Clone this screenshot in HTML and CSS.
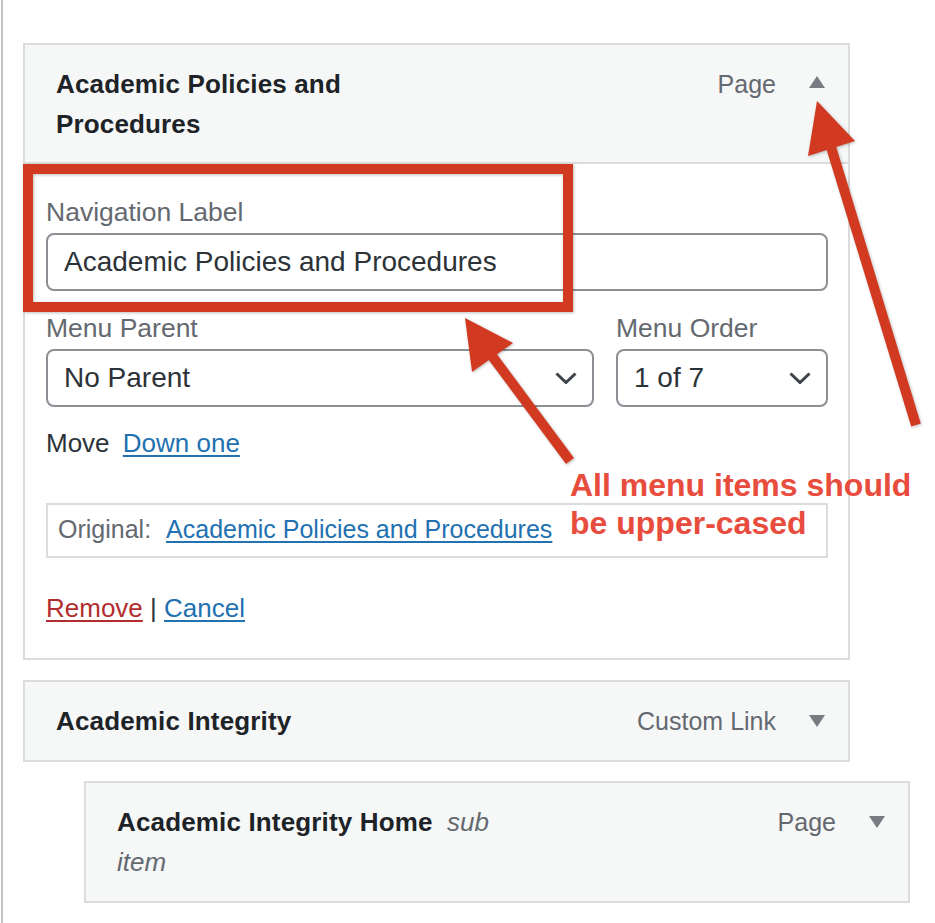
FILE: index.html
```html
<!DOCTYPE html>
<html lang="en">
<head>
<meta charset="utf-8">
<title>Menu items</title>
<link rel="stylesheet" href="styles.css">
</head>
<body>
<div class="page">
  <ul class="menu">
    <li class="item open">
      <div class="bar">
        <span class="title">Academic Policies and Procedures</span>
        <span class="controls"><span class="type">Page</span><span class="tri up"></span></span>
      </div>
      <div class="settings">
        <div class="field">
          <span class="label">Navigation Label</span>
          <div class="input">Academic Policies and Procedures</div>
        </div>
        <div class="row">
          <div class="field">
            <span class="label">Menu Parent</span>
            <div class="input select">No Parent
              <svg class="chev" width="22" height="12" viewBox="0 0 22 12"><path d="M1.5 1.5 L11 10.5 L20.5 1.5" fill="none" stroke="#3c434a" stroke-width="3"/></svg>
            </div>
          </div>
          <div class="field">
            <span class="label">Menu Order</span>
            <div class="input select">1 of 7
              <svg class="chev" width="22" height="12" viewBox="0 0 22 12"><path d="M1.5 1.5 L11 10.5 L20.5 1.5" fill="none" stroke="#3c434a" stroke-width="3"/></svg>
            </div>
          </div>
        </div>
        <div class="move">Move <a class="link" href="#">Down one</a></div>
        <div class="original">Original: <a class="link orig-link" href="#">Academic Policies and Procedures</a></div>
        <div class="actions"><a class="link remove" href="#">Remove</a> | <a class="link" href="#">Cancel</a></div>
      </div>
    </li>
    <li class="item">
      <div class="bar">
        <span class="title">Academic Integrity</span>
        <span class="controls"><span class="type">Custom Link</span><span class="tri down"></span></span>
      </div>
    </li>
    <li class="item sub">
      <div class="bar">
        <span class="title">Academic Integrity Home <em class="subtag first">sub</em> <em class="subtag">item</em></span>
        <span class="controls"><span class="type">Page</span><span class="tri down"></span></span>
      </div>
    </li>
  </ul>
</div>

<svg class="overlay" width="935" height="923" viewBox="0 0 935 923">
  <rect x="28" y="169" width="540" height="138" fill="none" stroke="#d13a21" stroke-width="10"/>
  <line x1="570" y1="461" x2="492" y2="356" stroke="#d13a21" stroke-width="10"/>
  <polygon points="465,318 513,343 472,372" fill="#d13a21"/>
  <line x1="916" y1="425" x2="831" y2="147" stroke="#d13a21" stroke-width="10"/>
  <polygon points="817,101 855,141 808,156" fill="#d13a21"/>
</svg>
<div class="note">All menu items should<br>be upper-cased</div>
</body>
</html>
```
FILE: styles.css
```css
* { box-sizing: border-box; margin: 0; padding: 0; }
html, body { background: #fff; }
body {
  position: relative;
  width: 935px;
  height: 923px;
  overflow: hidden;
  font-family: "Liberation Sans", Arial, sans-serif;
  color: #2c3338;
}
.page {
  height: 923px;
  margin-left: 1px;
  border-left: 2px solid #c3c4c7;
  padding: 43px 0 0 20px;
}
.menu {
  list-style: none;
  width: 827px;
  display: flex;
  flex-direction: column;
  gap: 19px;
}
.item {
  border: 2px solid #dcdcde;
  background: #f6f7f7;
}
.item.open { margin-bottom: 1px; }
.item.sub { margin-left: 61px; width: 826px; }
.bar {
  display: flex;
  justify-content: space-between;
  align-items: flex-start;
  padding: 19px 23px 19px 31px;
}
.item.open .bar {
  padding-bottom: 18px;
  border-bottom: 2px solid #dcdcde;
}
.title {
  max-width: 400px;
  font-size: 26px;
  line-height: 40px;
  font-weight: 700;
  color: #1d2327;
  letter-spacing: 0.15px;
}
.subtag {
  font-weight: 400;
  font-style: italic;
  color: #646970;
  letter-spacing: 0;
}
.subtag.first { margin-left: 7px; }
.controls {
  display: flex;
  align-items: center;
  gap: 33px;
  height: 40px;
  font-size: 25px;
  line-height: 40px;
  color: #646970;
}
.tri {
  width: 0;
  height: 0;
  border-left: 8px solid transparent;
  border-right: 8px solid transparent;
}
.tri.up { border-bottom: 12px solid #787c82; margin-bottom: 4px; }
.tri.down { border-top: 12px solid #787c82; }
.settings {
  background: #fff;
  padding: 28px 20px 30px 21px;
}
.label {
  display: block;
  font-size: 26.5px;
  line-height: 40px;
  color: #646970;
}
.input {
  margin-top: 1px;
  height: 58px;
  border: 2px solid #8c8f94;
  border-radius: 8px;
  background: #fff;
  display: flex;
  align-items: center;
  padding: 0 16px;
  font-size: 28px;
  color: #2c3338;
  white-space: nowrap;
}
.select { justify-content: space-between; padding-right: 15px; }
.row {
  margin-top: 17px;
  display: grid;
  grid-template-columns: 1fr 212px;
  gap: 22px;
}
.move {
  margin-top: 16px;
  font-size: 26px;
  line-height: 40px;
  color: #2c3338;
}
.move .link { margin-left: 6px; }
.link {
  color: #2271b1;
  text-decoration: underline;
  text-decoration-thickness: 2px;
  text-underline-offset: 3px;
}
.remove { color: #b32d2e; }
.original {
  margin-top: 40px;
  border: 2px solid #dcdcde;
  padding: 4px 10px 7px;
  font-size: 25px;
  line-height: 40px;
  color: #646970;
  white-space: nowrap;
}
.orig-link { margin-left: 8px; }
.actions {
  margin-top: 30px;
  font-size: 26px;
  line-height: 40px;
  color: #2c3338;
}
.overlay {
  position: absolute;
  left: 0;
  top: 0;
  pointer-events: none;
  filter: drop-shadow(1px 1px 1.5px rgba(0, 0, 0, 0.25));
}
.note {
  position: absolute;
  left: 570px;
  top: 466px;
  font-size: 32px;
  line-height: 38px;
  font-weight: 700;
  color: #e84c3d;
  white-space: nowrap;
}
```
